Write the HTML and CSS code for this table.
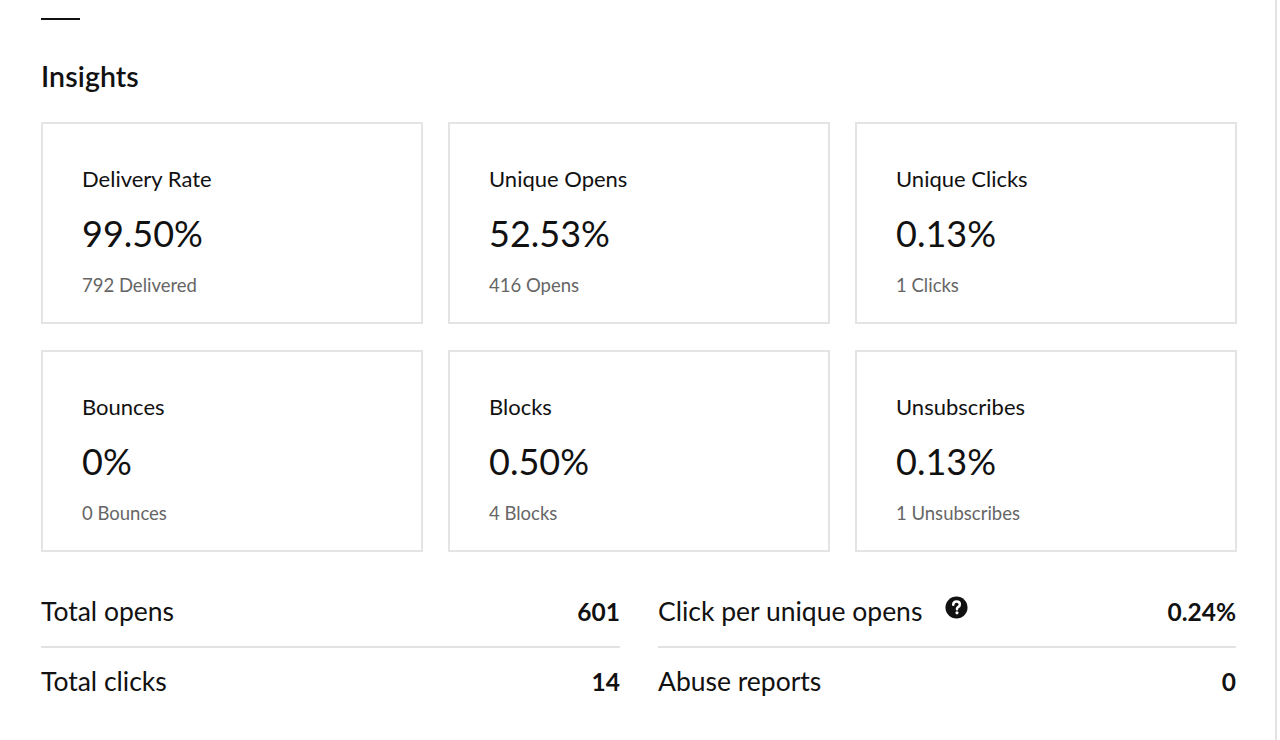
FILE: index.html
```html
<!DOCTYPE html>
<html lang="en">
<head>
<meta charset="utf-8">
<title>Insights</title>
<link rel="stylesheet" href="styles.css">
</head>
<body>
<div class="page">
  <div class="rule"></div>
  <h2 class="title">Insights</h2>
  <div class="cards">
    <div class="card">
      <div class="card-label">Delivery Rate</div>
      <div class="card-value">99.50%</div>
      <div class="card-sub">792 Delivered</div>
    </div>
    <div class="card">
      <div class="card-label">Unique Opens</div>
      <div class="card-value">52.53%</div>
      <div class="card-sub">416 Opens</div>
    </div>
    <div class="card">
      <div class="card-label">Unique Clicks</div>
      <div class="card-value">0.13%</div>
      <div class="card-sub">1 Clicks</div>
    </div>
    <div class="card">
      <div class="card-label">Bounces</div>
      <div class="card-value">0%</div>
      <div class="card-sub">0 Bounces</div>
    </div>
    <div class="card">
      <div class="card-label">Blocks</div>
      <div class="card-value">0.50%</div>
      <div class="card-sub">4 Blocks</div>
    </div>
    <div class="card">
      <div class="card-label">Unsubscribes</div>
      <div class="card-value">0.13%</div>
      <div class="card-sub">1 Unsubscribes</div>
    </div>
  </div>
  <div class="stats">
    <div class="stat-col">
      <div class="stat-row">
        <span class="stat-name">Total opens</span>
        <span class="stat-value">601</span>
      </div>
      <div class="stat-row">
        <span class="stat-name">Total clicks</span>
        <span class="stat-value">14</span>
      </div>
    </div>
    <div class="stat-col">
      <div class="stat-row">
        <span class="stat-name">Click per unique opens
          <svg class="help" viewBox="0 0 24 24" width="23" height="23" aria-hidden="true">
            <circle cx="12" cy="12" r="11.5" fill="#111"/>
            <path d="M8.6 9.2c0-2 1.5-3.4 3.5-3.4s3.4 1.3 3.4 3c0 1.5-.9 2.2-1.9 2.8-.8.5-1.1.8-1.1 1.7v.5" fill="none" stroke="#fff" stroke-width="2.6" stroke-linecap="round"/>
            <circle cx="12.5" cy="17.6" r="1.6" fill="#fff"/>
          </svg>
        </span>
        <span class="stat-value">0.24%</span>
      </div>
      <div class="stat-row">
        <span class="stat-name">Abuse reports</span>
        <span class="stat-value">0</span>
      </div>
    </div>
  </div>
</div>
</body>
</html>
```

FILE: styles.css
```css
html, body {
  margin: 0;
  padding: 0;
  background: #fff;
}
body {
  font-family: "Lato", "Inter", "Liberation Sans", sans-serif;
  color: #111;
}
.page {
  width: 1277px;
  min-height: 740px;
  box-sizing: border-box;
  padding: 18px 0 0 41px;
  border-right: 2px solid #e3e3e3;
}
.rule {
  width: 39px;
  height: 2px;
  background: #111;
}
.title {
  margin: 0;
  padding-top: 39px;
  font-size: 28.5px;
  line-height: 34px;
  font-weight: 600;
  letter-spacing: 0.1px;
}
.cards {
  margin-top: 29px;
  display: grid;
  grid-template-columns: repeat(3, 382px);
  column-gap: 25px;
  row-gap: 26px;
}
.card {
  height: 202px;
  box-sizing: border-box;
  border: 2px solid #e4e4e4;
  padding: 43px 0 0 39px;
}
.card-label {
  font-size: 22px;
  line-height: 24px;
}
.card-value {
  margin-top: 20px;
  font-size: 36px;
  line-height: 44px;
  font-weight: 400;
}
.card-sub {
  margin-top: 18px;
  font-size: 18.5px;
  line-height: 24px;
  color: #666;
}
.stats {
  margin-top: 29px;
  display: grid;
  grid-template-columns: 579px 578px;
  column-gap: 38px;
}
.stat-row {
  display: flex;
  justify-content: space-between;
  align-items: center;
  height: 66px;
  box-sizing: border-box;
  font-size: 26.5px;
}
.stat-row:first-child {
  height: 67px;
  padding-bottom: 5px;
  border-bottom: 2px solid #e2e2e2;
}
.stat-name {
  display: flex;
  align-items: center;
}
.help {
  margin-left: 23px;
  margin-top: -8px;
}
.stat-value {
  font-weight: 700;
  font-size: 24.5px;
}
```
